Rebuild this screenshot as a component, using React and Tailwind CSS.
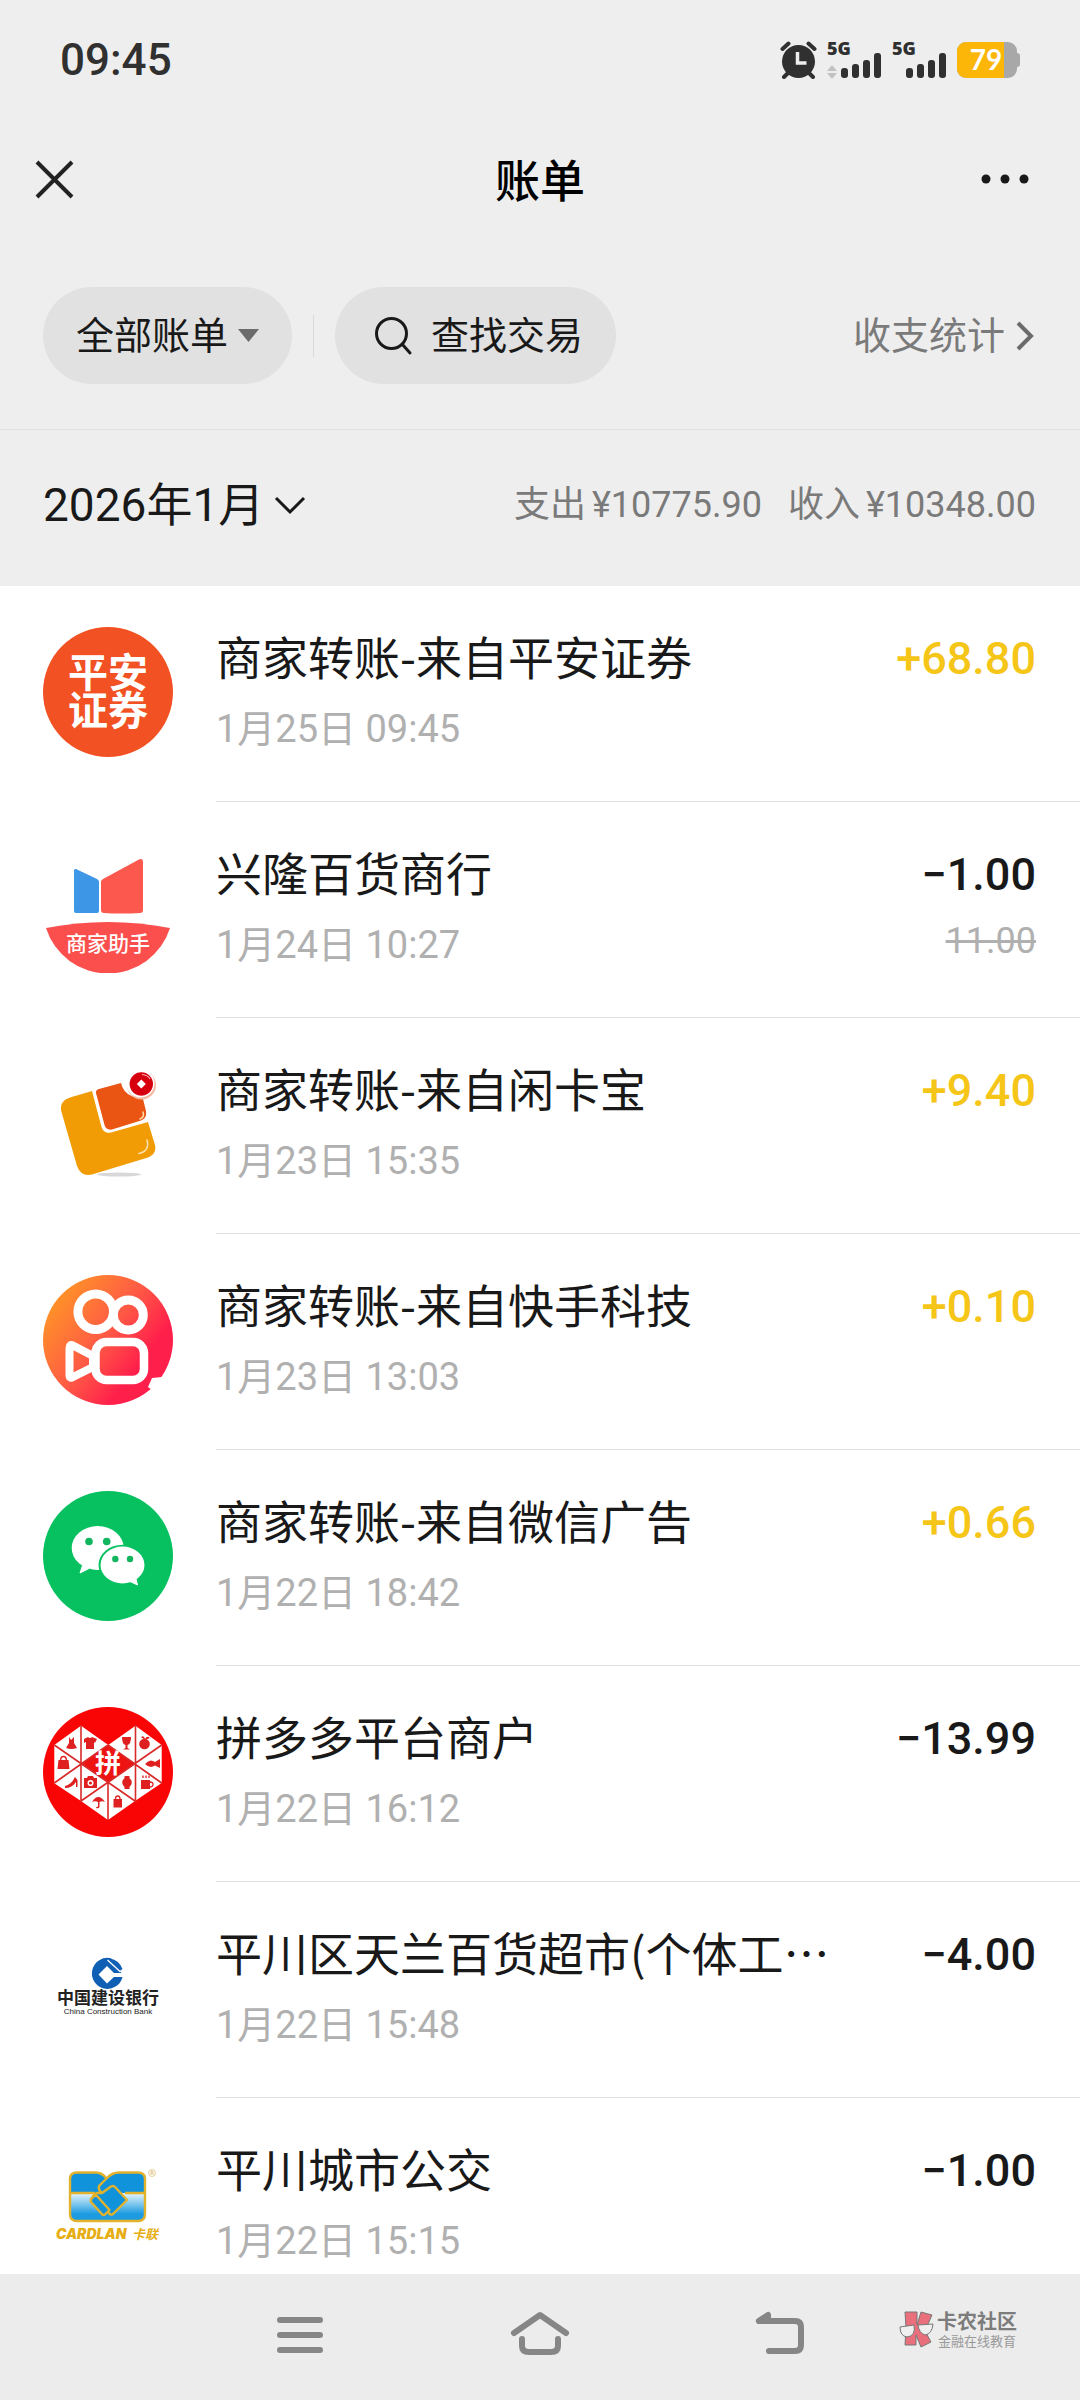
const CJK = "font-['Noto_Sans_CJK_SC',sans-serif]";

function Signal({ roaming }) {
  return (
    <svg width="55" height="54" viewBox="0 -8 55 54" className="shrink-0" fill="#303030">
      <text x="0" y="14" fontSize="18" fontWeight="800" fontFamily="Open Sans, sans-serif">5G</text>
      {roaming && <path d="M5 24l5 6H0zM5 38l5-6H0z" fill="#c2c2c2" />}
      <rect x="14" y="27" width="7" height="10" rx="3" />
      <rect x="25" y="23" width="7" height="14" rx="3" />
      <rect x="36" y="19" width="7" height="18" rx="3" />
      <rect x="47" y="12" width="7" height="25" rx="3" />
    </svg>
  );
}

function StatusBar() {
  return (
    <div className="flex h-[120px] shrink-0 items-center justify-between px-[60px]">
      <time className="text-[44px] leading-[48px] font-medium text-[#303030]">09:45</time>
      <div className="flex items-center gap-[10px]">
        <svg width="37" height="38" viewBox="0 0 37 38" fill="none" stroke="#303030" strokeLinecap="round">
          <circle cx="18.500" cy="20.500" r="16.500" fill="#303030" stroke="none" />
          <path d="M2.500 8L8.500 2.500M34.500 8L28.500 2.500M8 32l-4 4M29 32l4 4" strokeWidth="4" />
          <path d="M17.500 11v11h9" stroke="#eee" strokeWidth="3.500" strokeLinecap="butt" />
        </svg>
        <Signal roaming />
        <Signal />
        <svg width="63" height="38" viewBox="0 0 63 38">
          <rect x="57" y="12" width="6" height="14" rx="3" fill="#a8a8a8" />
          <rect x="0" y="1" width="60" height="36" rx="9" fill="#a8a8a8" />
          <path d="M9 1H47V37H9A9 9 0 0 1 0 28V10A9 9 0 0 1 9 1Z" fill="#fbb608" />
          <text x="29" y="29" fontSize="28" fontWeight="700" fontFamily="Lato, sans-serif" fill="#fff" textAnchor="middle">79</text>
        </svg>
      </div>
    </div>
  );
}

function PinganLogo() {
  return (
    <svg viewBox="0 0 130 130" className="size-[130px]">
      <circle cx="65" cy="65" r="65" fill="#f15123" />
      <g fill="#fff" fontFamily="Noto Sans CJK SC, sans-serif" fontWeight="700" fontSize="40" textAnchor="middle">
        <text x="65" y="60">平安</text>
        <text x="65" y="98">证券</text>
      </g>
    </svg>
  );
}

function MerchantLogo() {
  return (
    <svg viewBox="0 0 130 130" className="size-[130px]">
      <path d="M33 26L54 36Q56 37 56 39V68Q56 70 54 70H33Q31 70 31 68V27.500Q31 25.500 33 26Z" fill="#3d96e6" />
      <path d="M60 36L96 16.500Q100 15 100 19V67Q100 70 97 70Q78 71 61 70Q58 70 58 67V39Q58 37 60 36Z" fill="#fd584e" />
      <path d="M3 85Q65 73 127 85A65 65 0 0 1 3 85Z" fill="#fb4f4d" />
      <text x="65" y="108" fontSize="21" fontWeight="500" fill="#fff" textAnchor="middle" fontFamily="Noto Sans CJK SC, sans-serif">商家助手</text>
    </svg>
  );
}

function XiankaLogo() {
  return (
    <svg viewBox="0 0 130 130" className="size-[130px]">
      <ellipse cx="76" cy="115.500" rx="22" ry="2" fill="#d8d8d8" />
      <path d="M49 32L27 38.500Q15.500 42 18.500 53L34 107Q38 118 49 115.500L105 98.500Q114 95 112 86L105 63L68 73.500Q61 75 58.500 68Z" fill="#f29c05" />
      <path d="M53 34Q52.500 31 56 30L78 24Q81 38 100 40L103 52Q104 59 98 61.500L69 70.500Q63 71.500 61.500 66Z" fill="#ea5514" />
      <path d="M97 60Q102 58 100 53M96 94.500Q107 92 104 81" fill="none" stroke="#ffe3b0" strokeWidth="1.500" strokeLinecap="round" />
      <circle cx="98.500" cy="26" r="14.500" fill="#f3b9a2" />
      <circle cx="97.500" cy="24.500" r="14" fill="#fff" />
      <circle cx="98.300" cy="25" r="11.700" fill="#d7000f" />
      <path d="M98.300 20.500l4.500 4.500l-4.500 4.500l-4.500-4.500z" fill="#fff" />
      <path d="M99 15.500Q105 16 107 20" fill="none" stroke="#f6b0b0" strokeWidth="1.200" />
    </svg>
  );
}

function KuaishouLogo() {
  return (
    <svg viewBox="0 0 130 130" className="size-[130px]">
      <defs>
        <linearGradient id="ks" x1="0.050" y1="0.200" x2="0.850" y2="0.800">
          <stop offset="0" stopColor="#ff9526" />
          <stop offset="0.500" stopColor="#ff5a45" />
          <stop offset="0.850" stopColor="#ff1f4b" />
        </linearGradient>
      </defs>
      <circle cx="65" cy="65" r="65" fill="url(#ks)" />
      <g fill="none" stroke="#fff" strokeLinejoin="round">
        <circle cx="52.700" cy="36.700" r="17.800" strokeWidth="9" />
        <circle cx="85.300" cy="40" r="15" strokeWidth="9" />
        <rect x="52.500" y="67" width="48.500" height="38" rx="11" strokeWidth="8.500" />
        <path d="M30 70.500Q26.500 69 26.500 73V100Q26.500 104 30 102L50 92V81Z" strokeWidth="8" />
      </g>
      <path d="M105 112L109 103L119 102L115 111Q110 117 105 112Z" fill="#fff" />
    </svg>
  );
}

function WechatLogo() {
  return (
    <svg viewBox="0 0 130 130" className="size-[130px]">
      <circle cx="65" cy="65" r="65" fill="#07c160" />
      <path d="M40 73L37 82L46 77.500Z" fill="#fff" stroke="#fff" strokeLinejoin="round" />
      <ellipse cx="54.700" cy="57" rx="26" ry="22" fill="#fff" />
      <ellipse cx="79.500" cy="74" rx="24" ry="20.300" fill="#07c160" />
      <ellipse cx="79.500" cy="74" rx="22" ry="18.500" fill="#fff" />
      <path d="M86 90L94.500 94L92.500 86Z" fill="#fff" stroke="#fff" strokeLinejoin="round" />
      <g fill="#10b55d">
        <circle cx="46" cy="50.500" r="3.800" />
        <circle cx="63.700" cy="50.500" r="3.800" />
        <circle cx="72.300" cy="68" r="3.200" />
        <circle cx="87" cy="68" r="3.200" />
      </g>
    </svg>
  );
}

function PinduoduoLogo() {
  return (
    <svg viewBox="0 0 130 130" className="size-[130px]">
      <circle cx="65" cy="65" r="65" fill="#fa0505" />
      <path d="M38 18.700L11.300 38V76.300L38 94L65 113L92 94L118.700 76V38L92.500 18.700L65.300 38Z" fill="#fff" />
      <path d="M38 56.500L65.300 38L92.500 56.500L65.300 75.700Z" fill="#ee1313" />
      <path d="M38 18V95M92.500 18V95M65 75V113M11.300 38L92 94M118.700 38L38 94M11.300 76L65 38M65 38L118.700 76" stroke="#d92a2a" strokeWidth="1.600" fill="none" />
      <text x="65" y="65.500" fontSize="26" fontWeight="700" fill="#fff" textAnchor="middle" fontFamily="Noto Sans CJK SC, sans-serif">拼</text>
      <g fill="#df2020">
        <path d="M26 30L28 33L31 30L31 36L34 41Q28 43 23 41L26 36Z" />
        <path d="M41 32L45 30Q47 32 49 30L54 32L52 36L51 35V42H43V35L41 36Z" />
        <path d="M79 30H88Q88 37 84.500 38V41L87 42.500H80L82.500 41V38Q79 37 79 30Z" />
        <circle cx="101.500" cy="37" r="5.300" />
        <path d="M98 30Q101 28 102 32Q104 28 107 31L102 33Z" />
        <path d="M15.500 53H25.500L26.500 62H14.500Z" />
        <path d="M17.500 54Q17.500 49.500 20.500 49.500Q23.500 49.500 23.500 54" fill="none" stroke="#df2020" strokeWidth="1.400" />
        <path d="M102 57Q107 51 112 55L117 52V61L112 58.500Q107 62 102 57Z" />
        <path d="M22 79Q28 78 32 70L34.500 73V80H33V75Q29 81 22 81Z" />
        <path d="M41 71H44L45 69H50L51 71H54V81H41Z" />
        <circle cx="47.500" cy="76" r="3" fill="#fff" />
        <circle cx="47.500" cy="76" r="1.600" />
        <circle cx="84" cy="75.500" r="4.800" />
        <path d="M81.500 69H86.500V82H81.500Z" />
        <path d="M98 73H107V82H98Z" />
        <path d="M107 75Q110.500 75 110 78Q109.500 80 107 80M100 71V68.500M103 71V68.500M106 71V68.500" fill="none" stroke="#df2020" strokeWidth="1.300" />
        <path d="M49 95Q55 85 62 95Q59 93.500 56.500 95V100Q56 102 53 101V100Q55 100.500 55 99V95Q52 93.500 49 95Z" />
        <path d="M70.500 92H79V100.500H70.500Z" />
        <path d="M72.500 92Q72.500 89 74.800 89Q77 89 77 92" fill="none" stroke="#df2020" strokeWidth="1.300" />
      </g>
    </svg>
  );
}

function CcbLogo() {
  return (
    <svg viewBox="0 0 130 130" className="size-[130px]">
      <path d="M68 35.300A15.500 15.500 0 1 0 79.500 54H71L64 60.500L55.500 51.500L64 43L71 50H78.500Z" fill="#0f5fb4" />
      <path d="M67 35.500Q76 37 79.500 46L76 48.500L64 36Q65 35 67 35.500Z" fill="#0f5fb4" />
      <path d="M64.500 37L77.500 49" stroke="#fff" strokeWidth="1.300" />
      <text x="65" y="81" fontSize="17" fontWeight="700" fill="#222" textAnchor="middle" fontFamily="Noto Sans CJK SC, sans-serif">中国建设银行</text>
      <text x="65" y="91" fontSize="8" fill="#222" textAnchor="middle" fontFamily="Liberation Sans, sans-serif">China Construction Bank</text>
    </svg>
  );
}

function CardlanLogo() {
  return (
    <svg viewBox="0 0 130 130" className="size-[130px]">
      <defs>
        <linearGradient id="cl" x1="0" y1="0" x2="0" y2="1">
          <stop offset="0" stopColor="#eaf6fd" />
          <stop offset="0.750" stopColor="#1c9be0" />
        </linearGradient>
      </defs>
      <path d="M27 54V75Q27 82 34 82H95Q102 82 102 75V54Z" fill="url(#cl)" />
      <path d="M27 54V40Q27 33.500 34 33.500H53Q59 34 63.500 39.500Q69 33.500 76 33.500H95Q102 33.500 102 40V54Z" fill="#1193dc" />
      <g fill="none" stroke="#e3b22c" strokeWidth="2.400" strokeLinejoin="round">
        <path d="M27 54H52M82 54H102" />
        <path d="M63.500 39.500Q59 33.500 53 33.500H34Q27 33.500 27 40V75Q27 82 34 82H95Q102 82 102 75V40Q102 33.500 95 33.500H76Q69 33.500 63.500 39.500L56 47Q55 51 59 54" />
        <path d="M59 54L68 47.500Q71 46 73 49L84 61L70 75Q67 77 65.500 73L50 57L54 54Z" fill="#1193dc" />
        <path d="M54 57L66.500 71L62 75.500Q60 77 58 74L48 63Q47 60 50 58Q52 56 54 57Z" fill="#1193dc" />
      </g>
      <circle cx="109" cy="34" r="3.500" fill="none" stroke="#e8cf97" />
      <path d="M108 36V32H109.500Q111 33 109.500 34H108M109.500 34L110.500 36" fill="none" stroke="#d9b873" strokeWidth="0.800" />
      <text x="13" y="100" fontSize="14" fontWeight="900" fontStyle="italic" fill="#e6ae14" fontFamily="Inter, sans-serif">CARDLAN</text>
      <text x="89" y="100" fontSize="13" fontWeight="700" fontStyle="italic" fill="#e6ae14" fontFamily="Noto Sans CJK SC, sans-serif">卡联</text>
    </svg>
  );
}

const bills = [
  { Logo: PinganLogo, title: "商家转账-来自平安证券", date: "1月25日 09:45", amount: "+68.80" },
  { Logo: MerchantLogo, title: "兴隆百货商行", date: "1月24日 10:27", amount: "−1.00", original: "11.00" },
  { Logo: XiankaLogo, title: "商家转账-来自闲卡宝", date: "1月23日 15:35", amount: "+9.40" },
  { Logo: KuaishouLogo, title: "商家转账-来自快手科技", date: "1月23日 13:03", amount: "+0.10" },
  { Logo: WechatLogo, title: "商家转账-来自微信广告", date: "1月22日 18:42", amount: "+0.66" },
  { Logo: PinduoduoLogo, title: "拼多多平台商户", date: "1月22日 16:12", amount: "−13.99" },
  { Logo: CcbLogo, title: "平川区天兰百货超市(个体工…", date: "1月22日 15:48", amount: "−4.00" },
  { Logo: CardlanLogo, title: "平川城市公交", date: "1月22日 15:15", amount: "−1.00" },
];

function BillRow({ Logo, title, date, amount, original }) {
  const income = amount.startsWith("+");
  return (
    <li className="flex gap-[43px] pl-[43px]">
      <div className="shrink-0 pt-[41px]">
        <Logo />
      </div>
      <div className="flex min-w-0 flex-1 justify-between gap-6 border-b border-[#e2e2e2] pt-[35px] pr-[44px] pb-[46px]">
        <div className="min-w-0">
          <h2 className={`${CJK} truncate text-[46px] leading-[68px] text-[#191919]`}>{title}</h2>
          <p className="mt-[14px] text-[38px] leading-[52px] text-[#b0b0b0]">{date}</p>
        </div>
        <div className="shrink-0 pt-[6px] text-right">
          <p className={income ? "text-[45px] leading-[64px] font-medium text-[#f5c518]" : "text-[45px] leading-[64px] font-medium text-[#191919]"}>
            {amount}
          </p>
          {original && (
            <p className="mt-[8px] text-[36px] leading-[52px] text-[#b0b0b0]">
              <s>{original}</s>
            </p>
          )}
        </div>
      </div>
    </li>
  );
}

function NavBar() {
  return (
    <nav className="relative h-[126px] shrink-0 bg-[#ececec] px-[16.666%]">
      <div className="grid h-[120px] grid-cols-3 place-items-center">
        <button aria-label="最近任务">
          <svg width="60" height="48" viewBox="0 0 60 48" stroke="#868686" strokeWidth="6" strokeLinecap="round">
            <path d="M10 10H50M10 25H50M10 40H50" />
          </svg>
        </button>
        <button aria-label="主屏幕">
          <svg width="60" height="48" viewBox="0 0 60 48" fill="none" stroke="#868686" strokeWidth="6" strokeLinecap="round" strokeLinejoin="round">
            <path d="M4 23L30 5L56 23M12 29V36Q12 42 19 42H41Q48 42 48 36V29" />
          </svg>
        </button>
        <button aria-label="返回">
          <svg width="60" height="48" viewBox="0 0 60 48" fill="none" stroke="#868686" strokeWidth="6" strokeLinecap="round" strokeLinejoin="round">
            <path d="M18 5L9 11H45Q51 11 51 17V35Q51 41 45 41H19" />
            <path d="M18 6L9 11H18Z" fill="#868686" />
          </svg>
        </button>
      </div>
      <div className="absolute top-[37px] right-[63px] flex items-start gap-[2px]">
        <svg width="36" height="38" viewBox="0 0 36 38" stroke="#777" strokeWidth="1">
          <path d="M6 1H18V14L22 1L33 4L26 20L32 31L22 36L17 24V34H6L7 17Z" fill="#ea6f7d" />
          <path d="M1 16L15 14Q17 25 8 26Q1 25 1 16Z" fill="#efefef" />
          <path d="M19 14L34 13Q33 23 26 24Q20 22 19 14Z" fill="#efefef" />
        </svg>
        <div className={`${CJK} text-center`}>
          <p className="text-[20px] leading-[20px] font-bold text-[#7c7c7c]">卡农社区</p>
          <p className="mt-[1px] text-[13px] leading-[18px] text-[#999]">金融在线教育</p>
        </div>
      </div>
    </nav>
  );
}

export default function App() {
  return (
    <div lang="zh-CN" className="flex h-screen flex-col bg-[#eee] font-['Roboto','Noto_Sans_CJK_SC',sans-serif] text-[#191919]">
      <StatusBar />
      <header className="grid h-[118px] shrink-0 grid-cols-3 items-center px-[34px]">
        <button aria-label="关闭" className="justify-self-start">
          <svg width="40" height="40" viewBox="0 0 40 40" stroke="#222" strokeWidth="4">
            <path d="M3 3L38 38M38 3L3 38" />
          </svg>
        </button>
        <h1 className={`${CJK} text-center text-[45px] leading-[60px] font-medium text-black`}>账单</h1>
        <button aria-label="更多" className="justify-self-end">
          <svg width="66" height="20" viewBox="0 0 66 20" fill="#191919">
            <circle cx="6" cy="10" r="4.500" />
            <circle cx="25" cy="10" r="4.500" />
            <circle cx="44" cy="10" r="4.500" />
          </svg>
        </button>
      </header>
      <div className="flex shrink-0 items-center border-b border-[#e1e1e1] pt-[49px] pr-[45px] pb-[45px] pl-[43px]">
        <button className="flex h-[97px] items-center gap-[10px] rounded-full bg-[#e1e1e1] px-[33px] text-[38px] leading-[52px]">
          全部账单
          <svg width="21" height="14" viewBox="0 0 21 14" fill="#6b6b6b">
            <path d="M0 0H21L10.500 13Z" />
          </svg>
        </button>
        <div className="mx-[21px] h-[42px] w-px bg-[#dadada]" />
        <button className="flex h-[97px] items-center gap-[18px] rounded-full bg-[#e1e1e1] pr-[33px] pl-[38px] text-[38px] leading-[52px]">
          <svg width="40" height="40" viewBox="0 0 40 40" fill="none" stroke="#191919" strokeWidth="3" strokeLinecap="round">
            <circle cx="18.500" cy="17.500" r="15" />
            <path d="M29.500 28.500L37 37" />
          </svg>
          查找交易
        </button>
        <a href="#stats" className="ml-auto flex items-center gap-[10px] text-[38px] leading-[52px] text-[#7a7a7a]">
          收支统计
          <svg width="20" height="30" viewBox="0 0 20 30" fill="none" stroke="#6b6b6b" strokeWidth="4">
            <path d="M3 2L16 15L3 28" />
          </svg>
        </a>
      </div>
      <div className="flex h-[156px] shrink-0 items-center justify-between pr-[44px] pb-[7px] pl-[43px]">
        <button className="flex items-center gap-[10px] text-[46px] leading-[64px]">
          2026年1月
          <svg width="32" height="20" viewBox="0 0 32 20" fill="none" stroke="#191919" strokeWidth="3">
            <path d="M2 3L16 17L30 3" />
          </svg>
        </button>
        <p className="flex items-baseline gap-[6px] text-[36px] leading-[52px] text-[#7a7a7a]">
          <span>支出</span>
          <span className="mr-[20px]">¥10775.90</span>
          <span>收入</span>
          <span>¥10348.00</span>
        </p>
      </div>
      <main className="min-h-0 flex-1 overflow-y-auto bg-white [scrollbar-width:none]">
        <ul>
          {bills.map((bill) => (
            <BillRow key={bill.date} {...bill} />
          ))}
        </ul>
      </main>
      <NavBar />
    </div>
  );
}
